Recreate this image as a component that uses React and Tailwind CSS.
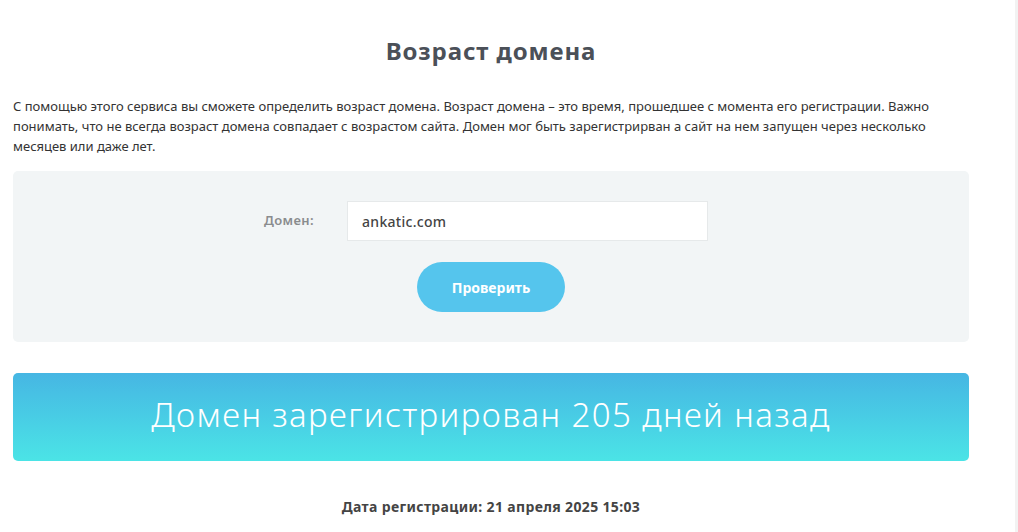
import React from 'react';

const font = { fontFamily: '"Noto Sans", "Open Sans", sans-serif' };

export default function App() {
  return (
    <div className="flex min-h-[532px] bg-white" style={font}>
      <div className="flex-1 pl-[13px]">
        <div className="w-[956px]">
          <h1 className="pt-[36px] text-center text-[24px] leading-[30px] font-bold tracking-[0.9px] text-[#4b5058]">
            Возраст домена
          </h1>

          <p className="mt-[30px] text-[13px] leading-[20px] text-[#333333]">
            С помощью этого сервиса вы сможете определить возраст домена. Возраст домена – это время, прошедшее с момента его регистрации. Важно понимать, что не всегда возраст домена совпадает с возрастом сайта. Домен мог быть зарегистрирван а сайт на нем запущен через несколько месяцев или даже лет.
          </p>

          {/* Form */}
          <div className="mt-[15px] rounded-[5px] bg-[#f2f5f6] pt-[30px] pb-[30px]">
            <div className="flex items-center">
              <label className="w-[301px] text-right text-[13px] font-semibold tracking-[0.4px] text-[#8a8c8e]">Домен:</label>
              <input
                readOnly
                value="ankatic.com"
                className="ml-[33px] h-[40px] w-[361px] border border-[#e6e9ea] bg-white px-[14px] text-[14px] font-medium tracking-[0.3px] text-[#444] outline-none"
              />
            </div>
            <div className="mt-[21px] flex justify-center">
              <button className="h-[50px] w-[148px] rounded-full bg-[#55c5ed] text-[14px] font-bold text-white">
                Проверить
              </button>
            </div>
          </div>

          {/* Result */}
          <div className="mt-[31px] flex h-[88px] items-center justify-center rounded-[5px] bg-gradient-to-b from-[#46b6e3] to-[#4be4e6]">
            <span className="-mt-[4px] text-[33px] font-light tracking-[1.4px] text-white">Домен зарегистрирован 205 дней назад</span>
          </div>

          <p className="mt-[36px] text-center text-[14px] leading-[20px] font-bold tracking-[0.35px] text-[#444]">
            Дата регистрации: 21 апреля 2025 15:03
          </p>
        </div>
      </div>
      <div className="w-[3px] bg-[#f2f2f2]" />
    </div>
  );
}
